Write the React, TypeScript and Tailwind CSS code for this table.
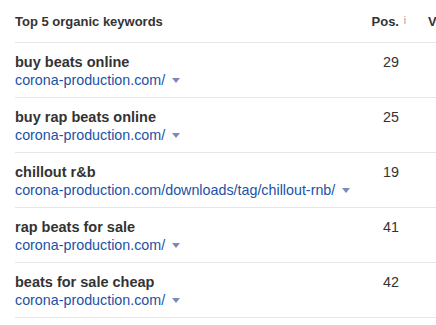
import React from "react";

const rows = [
  { k: "buy beats online", u: "corona-production.com/", p: 29 },
  { k: "buy rap beats online", u: "corona-production.com/", p: 25 },
  { k: "chillout r&b", u: "corona-production.com/downloads/tag/chillout-rnb/", p: 19 },
  { k: "rap beats for sale", u: "corona-production.com/", p: 41 },
  { k: "beats for sale cheap", u: "corona-production.com/", p: 42 },
];

function Caret() {
  return (
    <svg width="8" height="5" viewBox="0 0 8 5" className="ml-[7px] inline-block">
      <path d="M0 0 H8 L4 5 Z" fill="#7b88b9" />
    </svg>
  );
}

export default function App() {
  return (
    <div
      className="w-[436px] h-[325px] overflow-hidden bg-white pl-[15px]"
      style={{ fontFamily: '"Liberation Sans", Arial, sans-serif' }}
    >
      <div className="flex h-[43px] items-center border-b border-[#e6e6e6] text-[13px] font-bold text-[#333]">
        <div className="flex-1 pt-[2px]">Top 5 organic keywords</div>
        <div className="relative w-[40px] shrink-0 text-right pt-[2px] text-[#333]">
          Pos.
          <span className="absolute right-[-7px] top-[3px] text-[10px] font-normal text-[#9a9a9a]">i</span>
        </div>
        <div className="w-[37px] shrink-0 overflow-visible whitespace-nowrap pl-[29px] pt-[2px]">Vol</div>
      </div>
      {rows.map((r) => (
        <div key={r.k} className="flex h-[55px] border-b border-[#e6e6e6]">
          <div className="flex-1 pt-[10px]">
            <div className="text-[14.5px] font-bold leading-[18px] text-[#333]">{r.k}</div>
            <div className="flex items-center text-[14.3px] leading-[18px] text-[#1b52a6]">
              {r.u}
              <Caret />
            </div>
          </div>
          <div className="w-[40px] shrink-0 pt-[10px] text-right text-[14.3px] leading-[18px] text-[#333]">{r.p}</div>
          <div className="w-[37px] shrink-0" />
        </div>
      ))}
    </div>
  );
}
